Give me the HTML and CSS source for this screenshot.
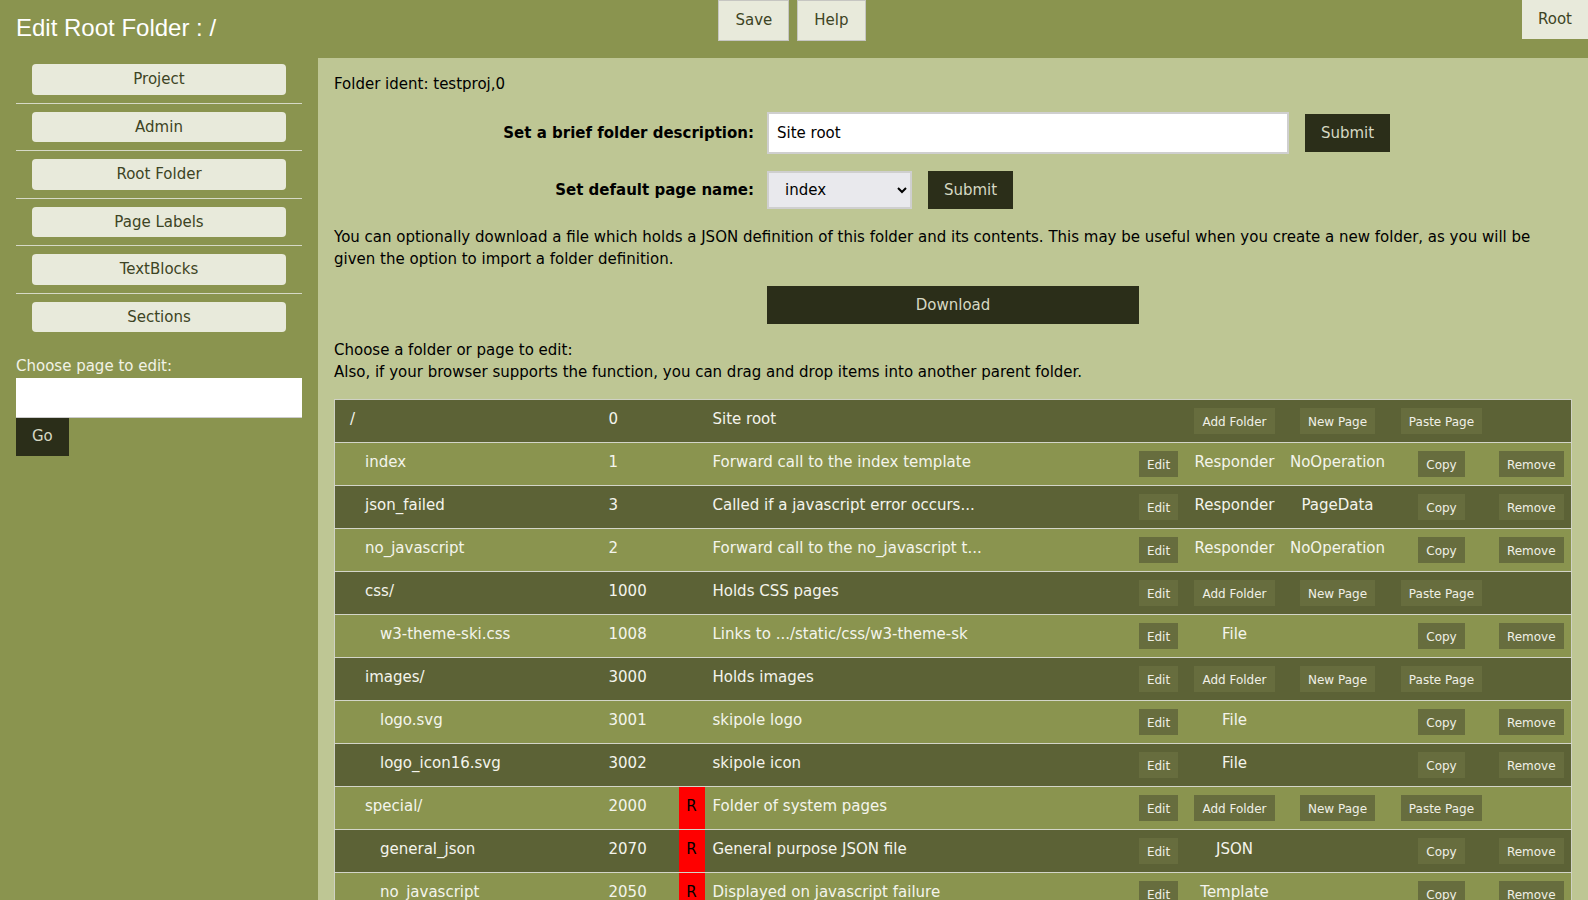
FILE: index.html
```html
<!DOCTYPE html>
<html lang="en">
<head>
<meta charset="utf-8">
<title>Edit Root Folder</title>
<link rel="stylesheet" href="styles.css">
</head>
<body>
<header class="topbar">
  <h1 class="title">Edit Root Folder : /</h1>
  <div class="top-actions">
    <button class="top-btn">Save</button>
    <button class="top-btn">Help</button>
  </div>
  <div class="root-wrap"><button class="root-btn">Root</button></div>
</header>
<div class="layout">
  <aside class="sidebar">
    <ul class="nav">
      <li><button class="nav-btn">Project</button></li>
      <li><button class="nav-btn">Admin</button></li>
      <li><button class="nav-btn">Root Folder</button></li>
      <li><button class="nav-btn">Page Labels</button></li>
      <li><button class="nav-btn">TextBlocks</button></li>
      <li><button class="nav-btn">Sections</button></li>
    </ul>
    <form class="chooser">
      <label class="chooser-label" for="pagechoose">Choose page to edit:</label>
      <input class="chooser-input" id="pagechoose" type="text">
      <button class="dark-btn go-btn" type="button">Go</button>
    </form>
  </aside>
  <main class="main">
    <p class="ident">Folder ident: testproj,0</p>
    <div class="form-row first">
      <label class="form-label">Set a brief folder description:</label>
      <input class="desc-input" type="text" value="Site root">
      <button class="dark-btn submit-btn" type="button">Submit</button>
    </div>
    <div class="form-row second">
      <label class="form-label">Set default page name:</label>
      <select class="page-select"><option>index</option><option>json_failed</option><option>no_javascript</option></select>
      <button class="dark-btn submit-btn" type="button">Submit</button>
    </div>
    <p class="info">You can optionally download a file which holds a JSON definition of this folder and its contents. This may be useful when you create a new folder, as you will be given the option to import a folder definition.</p>
    <button class="dark-btn download-btn" type="button">Download</button>
    <p class="choose">Choose a folder or page to edit:<br>Also, if your browser supports the function, you can drag and drop items into another parent folder.</p>
    <table class="tree">
      <colgroup>
        <col style="width:266px"><col style="width:78px"><col style="width:26px"><col style="width:427px"><col style="width:54px"><col style="width:98px"><col style="width:108px"><col style="width:100px"><col style="width:80px">
      </colgroup>
      <tbody>
        <tr class="dark">
          <td class="name lvl0">/</td><td class="ident-c">0</td><td class="rc"></td><td>Site root</td>
          <td class="bc"></td><td class="bc"><button class="sbtn">Add Folder</button></td><td class="bc"><button class="sbtn">New Page</button></td><td class="bc"><button class="sbtn">Paste Page</button></td><td class="bc"></td>
        </tr>
        <tr class="light">
          <td class="name lvl1">index</td><td class="ident-c">1</td><td class="rc"></td><td>Forward call to the index template</td>
          <td class="bc"><button class="sbtn">Edit</button></td><td class="tc">Responder</td><td class="tc">NoOperation</td><td class="bc"><button class="sbtn">Copy</button></td><td class="bc"><button class="sbtn">Remove</button></td>
        </tr>
        <tr class="dark">
          <td class="name lvl1">json_failed</td><td class="ident-c">3</td><td class="rc"></td><td>Called if a javascript error occurs...</td>
          <td class="bc"><button class="sbtn">Edit</button></td><td class="tc">Responder</td><td class="tc">PageData</td><td class="bc"><button class="sbtn">Copy</button></td><td class="bc"><button class="sbtn">Remove</button></td>
        </tr>
        <tr class="light">
          <td class="name lvl1">no_javascript</td><td class="ident-c">2</td><td class="rc"></td><td>Forward call to the no_javascript t...</td>
          <td class="bc"><button class="sbtn">Edit</button></td><td class="tc">Responder</td><td class="tc">NoOperation</td><td class="bc"><button class="sbtn">Copy</button></td><td class="bc"><button class="sbtn">Remove</button></td>
        </tr>
        <tr class="dark">
          <td class="name lvl1">css/</td><td class="ident-c">1000</td><td class="rc"></td><td>Holds CSS pages</td>
          <td class="bc"><button class="sbtn">Edit</button></td><td class="bc"><button class="sbtn">Add Folder</button></td><td class="bc"><button class="sbtn">New Page</button></td><td class="bc"><button class="sbtn">Paste Page</button></td><td class="bc"></td>
        </tr>
        <tr class="light">
          <td class="name lvl2">w3-theme-ski.css</td><td class="ident-c">1008</td><td class="rc"></td><td>Links to .../static/css/w3-theme-sk</td>
          <td class="bc"><button class="sbtn">Edit</button></td><td class="tc">File</td><td class="tc"></td><td class="bc"><button class="sbtn">Copy</button></td><td class="bc"><button class="sbtn">Remove</button></td>
        </tr>
        <tr class="dark">
          <td class="name lvl1">images/</td><td class="ident-c">3000</td><td class="rc"></td><td>Holds images</td>
          <td class="bc"><button class="sbtn">Edit</button></td><td class="bc"><button class="sbtn">Add Folder</button></td><td class="bc"><button class="sbtn">New Page</button></td><td class="bc"><button class="sbtn">Paste Page</button></td><td class="bc"></td>
        </tr>
        <tr class="light">
          <td class="name lvl2">logo.svg</td><td class="ident-c">3001</td><td class="rc"></td><td>skipole logo</td>
          <td class="bc"><button class="sbtn">Edit</button></td><td class="tc">File</td><td class="tc"></td><td class="bc"><button class="sbtn">Copy</button></td><td class="bc"><button class="sbtn">Remove</button></td>
        </tr>
        <tr class="dark">
          <td class="name lvl2">logo_icon16.svg</td><td class="ident-c">3002</td><td class="rc"></td><td>skipole icon</td>
          <td class="bc"><button class="sbtn">Edit</button></td><td class="tc">File</td><td class="tc"></td><td class="bc"><button class="sbtn">Copy</button></td><td class="bc"><button class="sbtn">Remove</button></td>
        </tr>
        <tr class="light">
          <td class="name lvl1">special/</td><td class="ident-c">2000</td><td class="rc restricted">R</td><td>Folder of system pages</td>
          <td class="bc"><button class="sbtn">Edit</button></td><td class="bc"><button class="sbtn">Add Folder</button></td><td class="bc"><button class="sbtn">New Page</button></td><td class="bc"><button class="sbtn">Paste Page</button></td><td class="bc"></td>
        </tr>
        <tr class="dark">
          <td class="name lvl2">general_json</td><td class="ident-c">2070</td><td class="rc restricted">R</td><td>General purpose JSON file</td>
          <td class="bc"><button class="sbtn">Edit</button></td><td class="tc">JSON</td><td class="tc"></td><td class="bc"><button class="sbtn">Copy</button></td><td class="bc"><button class="sbtn">Remove</button></td>
        </tr>
        <tr class="light">
          <td class="name lvl2">no_javascript</td><td class="ident-c">2050</td><td class="rc restricted">R</td><td>Displayed on javascript failure</td>
          <td class="bc"><button class="sbtn">Edit</button></td><td class="tc">Template</td><td class="tc"></td><td class="bc"><button class="sbtn">Copy</button></td><td class="bc"><button class="sbtn">Remove</button></td>
        </tr>
      </tbody>
    </table>
  </main>
</div>
</body>
</html>
```

FILE: styles.css
```css
* { box-sizing: border-box; }

body {
  margin: 0;
  font-family: "DejaVu Sans", Verdana, sans-serif;
  font-size: 15px;
  line-height: 1.5;
  color: #000;
  background: #bec694;
}

button, input, select {
  font: inherit;
  margin: 0;
}

/* ---------- top bar ---------- */
.topbar {
  display: grid;
  grid-template-columns: 1fr auto 1fr;
  height: 58px;
  background: #8a944f;
}

.title {
  margin: 10px 0 0 16px;
  font-family: "Liberation Sans", Arial, sans-serif;
  font-size: 24px;
  font-weight: 400;
  line-height: 36px;
  color: #fff;
}

.top-actions {
  display: flex;
  align-items: flex-start;
  gap: 8px;
  margin-right: 4px;
}

.top-btn {
  padding: 8px 16px;
  background: #e8eadb;
  color: #3d4424;
  border: 1px solid #c6c6c2;
  cursor: pointer;
}

.root-wrap {
  display: flex;
  justify-content: flex-end;
  align-items: flex-start;
}

.root-btn {
  padding: 8px 16px;
  background: #e8eadb;
  color: #3d4424;
  border: 0;
}

/* ---------- layout ---------- */
.layout {
  display: flex;
  min-height: calc(100vh - 58px);
}

.sidebar {
  flex: none;
  width: 318px;
  background: #8a944f;
  padding: 6px 16px 16px;
}

.nav {
  list-style: none;
  margin: 0;
  padding: 0;
}

.nav li {
  padding: 0 16px 8px;
  margin-bottom: 8px;
  border-bottom: 1px solid #d6d9c6;
}

.nav li:last-child {
  padding-bottom: 0;
  margin-bottom: 0;
  border-bottom: 0;
}

.nav-btn {
  display: block;
  width: 100%;
  padding: 4px 0;
  background: #e8eadb;
  color: #3d4424;
  border: 0;
  border-radius: 4px;
  text-align: center;
}

.chooser {
  margin-top: 23px;
}

.chooser-label {
  display: block;
  color: #f1f2e6;
}

.chooser-input {
  display: block;
  width: 100%;
  height: 40px;
  padding: 8px;
  border: 0;
  border-bottom: 1px solid #ccc;
  background: #fff;
}

.dark-btn {
  background: #2b2e19;
  color: #d6d8c3;
  border: 0;
}

.go-btn {
  display: block;
  height: 38px;
  padding: 0 16px;
}

/* ---------- main ---------- */
.main {
  flex: 1;
  background: #bec694;
  padding: 15px 17px 0 16px;
}

.ident {
  margin: 0;
}

.form-row {
  display: flex;
  align-items: center;
}

.form-row.first {
  margin-top: 16px;
}

.form-row.second {
  margin-top: 17px;
}

.form-label {
  width: 420px;
  margin-right: 13px;
  padding-top: 2px;
  text-align: right;
  font-weight: bold;
}

.desc-input {
  width: 522px;
  height: 42px;
  padding: 0 8px;
  border: 2px solid #cfcfcf;
  background: #fff;
}

.submit-btn {
  width: 85px;
  height: 38px;
  padding: 2px 0 0;
  margin-left: 16px;
}

.page-select {
  width: 145px;
  height: 38px;
  padding: 0 8px 0 12px;
  border: 2px solid #cfcfcf;
  background: #e9e9ed;
  color: #000;
}

.info {
  margin: 17px 0 0;
}

.download-btn {
  display: block;
  width: 372px;
  height: 38px;
  padding: 1px 0 0;
  margin: 15px auto 0;
}

.choose {
  margin: 15px 0 0;
}

/* ---------- tree table ---------- */
.tree {
  width: 100%;
  margin-top: 15px;
  table-layout: fixed;
  border-collapse: collapse;
  border: 1px solid #cfd1c4;
}

.tree tr {
  border-bottom: 1px solid #d3d5c8;
}

.tree tr.dark { background: #5c6236; }
.tree tr.light { background: #8a944f; }

.tree td {
  padding: 8px;
  vertical-align: top;
  color: #f4f4ec;
  white-space: nowrap;
  overflow: hidden;
}

.tree td.lvl0 { padding-left: 15px; }
.tree td.lvl1 { padding-left: 30px; }
.tree td.lvl2 { padding-left: 45px; }

.tree td.rc {
  padding: 8px 0;
  text-align: center;
  color: #000;
}

.tree td.restricted {
  background: #ff0000;
}

.tree td.bc,
.tree td.tc {
  padding: 8px 0;
  text-align: center;
}

.sbtn {
  display: inline-block;
  vertical-align: top;
  font-size: 12px;
  line-height: 18px;
  padding: 5px 8px 3px;
  background: #676d3e;
  color: #f0f0e6;
  border: 0;
}
```
